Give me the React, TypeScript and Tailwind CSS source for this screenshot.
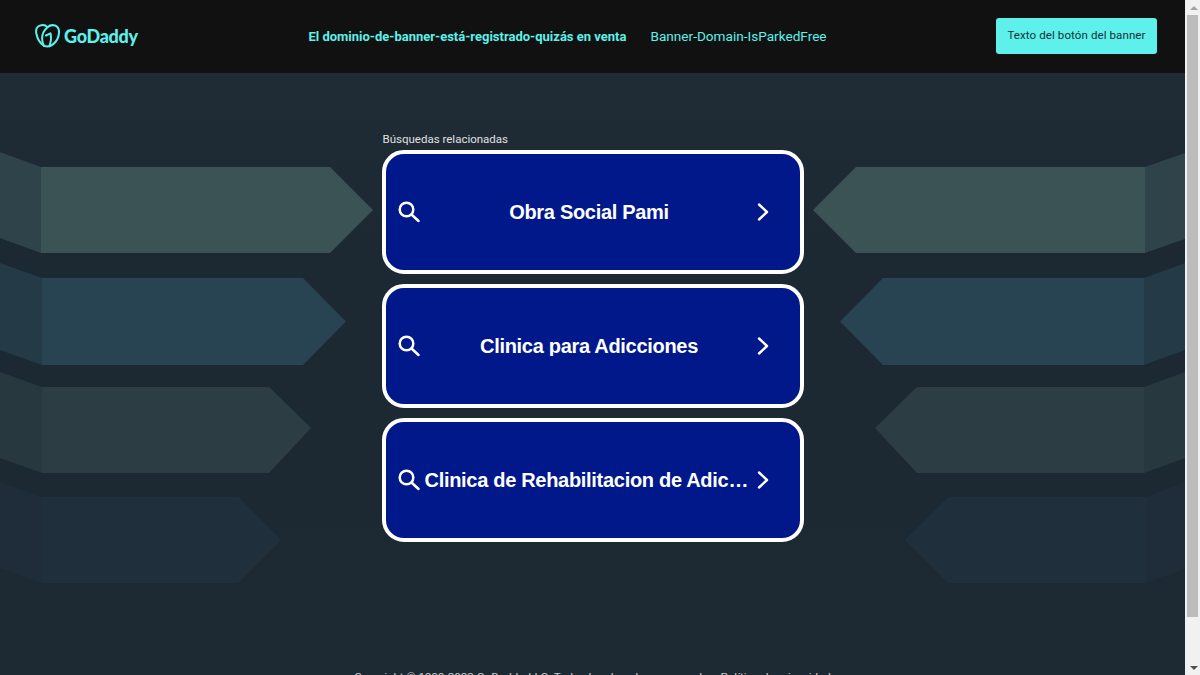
const searches = ["Obra Social Pami", "Clinica para Adicciones", "Clinica de Rehabilitacion de Adicciones"]

function BackgroundArrows() {
    return (
        <svg className="absolute left-0 top-0" width="1185" height="602" viewBox="0 73 1185 602">
            <defs>
                <linearGradient id="pageBg" x1="0" y1="0" x2="0" y2="1">
                    <stop offset="0" stopColor="#1f2c35" />
                    <stop offset="0.3" stopColor="#1c2832" />
                    <stop offset="0.65" stopColor="#1d2932" />
                    <stop offset="1" stopColor="#1e2a33" />
                </linearGradient>
            </defs>
            <rect x="0" y="73" width="1185" height="602" fill="url(#pageBg)" />
            {/* left side */}
            <polygon points="0,152 41,167 41,253 0,238" fill="#2f444a" />
            <polygon points="41,167 330,167 373,210 330,253 41,253" fill="#3c5356" />
            <polygon points="0,263 42,278 42,365 0,350" fill="#243a47" />
            <polygon points="42,278 303,278 346,321.5 303,365 42,365" fill="#284352" />
            <polygon points="0,372 42,387 42,473 0,458" fill="#27383f" />
            <polygon points="42,387 269,387 311,428 269,473 42,473" fill="#2c3e44" />
            <polygon points="0,482 41,497 41,583 0,568" fill="#1e2d39" />
            <polygon points="41,497 238,497 281,540 238,583 41,583" fill="#1f303c" />
            {/* right side */}
            <polygon points="1185,153 1145,167 1145,253 1185,239" fill="#2f444a" />
            <polygon points="1145,167 856,167 813,210 856,253 1145,253" fill="#3c5356" />
            <polygon points="1185,263 1144,278 1144,365 1185,350" fill="#243a47" />
            <polygon points="1144,278 883,278 840,321.5 883,365 1144,365" fill="#284352" />
            <polygon points="1185,372 1144,387 1144,473 1185,458" fill="#27383f" />
            <polygon points="1144,387 917,387 875,428 917,473 1144,473" fill="#2c3e44" />
            <polygon points="1185,482 1146,497 1146,583 1185,569" fill="#1e2d39" />
            <polygon points="1146,497 948,497 905,540 948,583 1146,583" fill="#1f303c" />
        </svg>
    )
}

function Logo() {
    return (
        <div className="mb-[2px] flex w-[104px] items-center gap-[4px] text-[#5ef0ea]">
            <svg width="25" height="24" viewBox="0 0 25 24" fill="none" stroke="currentColor" strokeWidth="2" strokeLinecap="round" strokeLinejoin="round" className="shrink-0">
                <path d="M12.5 3.2C10.8 1.3 7.6.7 4.8 1.6 1.700 2.700.6 6 1.400 9.800c.8 4.400 3.700 9.400 7.400 12 3 1 6.500.7 9.200-1.400 3.600-2.900 5.700-7.500 6-11.500.2-3.400-1.200-6.400-4-7.400-2.700-.8-5.600 0-7.500 1.700" />
                <path d="M12.500 3.200C9.500 5.800 7 10 7.100 14.300c.1 3.300 1 6.300 1.700 7.500" />
                <path d="M11 11.500l4.500-2.200c.8 3.400.6 8.300-1.200 13" />
            </svg>
            <span className="font-['Lato',sans-serif] text-[18px] font-black leading-none tracking-[-0.3px]">GoDaddy</span>
        </div>
    )
}

function SearchIcon() {
    return (
        <svg width="22" height="22" viewBox="0 0 22 22" fill="none" stroke="white" strokeWidth="2.500" strokeLinecap="round" className="shrink-0">
            <circle cx="8.500" cy="8.500" r="6.800" />
            <path d="M13.500 13.500L20.500 20" />
        </svg>
    )
}

function ChevronIcon() {
    return (
        <svg width="12" height="18" viewBox="0 0 12 18" fill="none" stroke="white" strokeWidth="2.400" strokeLinecap="round" strokeLinejoin="round" className="shrink-0">
            <path d="M2 1.500L10 9L2 16.500" />
        </svg>
    )
}

function SearchCard({ label }: { label: string }) {
    return (
        <a className="flex h-[124px] w-[422px] items-center rounded-[22px] border-4 border-white bg-[#00188a] pl-[12px] pr-[31px]">
            <SearchIcon />
            <span className="ml-[5px] mr-[3px] min-w-0 flex-1 truncate text-center font-['Liberation_Sans',sans-serif] text-[20px] font-bold leading-none tracking-[-0.3px] text-white">
                {label}
            </span>
            <ChevronIcon />
        </a>
    )
}

function Scrollbar() {
    return (
        <div className="flex h-[675px] w-[15px] shrink-0 flex-col items-end bg-[#f1f1f1]">
            <div className="flex h-[15px] w-[13px] items-center justify-center">
                <div className="h-0 w-0 border-x-[4px] border-b-[4px] border-x-transparent border-b-[#a3a3a3]" />
            </div>
            <div className="mr-[2px] h-[602px] w-[11px] bg-[#bcbcbc]" />
            <div className="flex w-[13px] flex-1 items-end justify-center pb-[5px]">
                <div className="h-0 w-0 border-x-[4px] border-t-[4px] border-x-transparent border-t-[#505050]" />
            </div>
        </div>
    )
}

export default function App() {
    return (
        <div className="flex h-[675px] w-[1200px] overflow-hidden">
            <div className="flex min-w-0 flex-1 flex-col">
                <header className="flex h-[73px] shrink-0 items-center justify-between bg-[#111111] pl-[35px] pr-[28px] font-['Roboto',sans-serif]">
                    <Logo />
                    <p className="mb-[2px] whitespace-nowrap text-[#5ef0ea]">
                        <b className="text-[13px] font-bold">El dominio-de-banner-está-registrado-quizás en venta</b>
                        <span className="ml-[24px] text-[13.600px] font-normal">Banner-Domain-IsParkedFree</span>
                    </p>
                    <button className="mb-[2px] h-[36px] w-[161px] rounded-[3px] bg-[#5ef0ea] text-[11.500px] tracking-[0.1px] text-[#123238]">
                        Texto del botón del banner
                    </button>
                </header>
                <main className="relative flex flex-1 flex-col items-center pt-[57px] font-['Roboto',sans-serif]">
                    <BackgroundArrows />
                    <div className="relative flex w-[422px] flex-col gap-[10px]">
                        <p className="-mb-[10px] h-[20px] pl-px text-[11.500px] leading-[18px] text-[#e0e0e0]">Búsquedas relacionadas</p>
                        {searches.map((label) => (
                            <SearchCard key={label} label={label} />
                        ))}
                    </div>
                    <p className="relative mt-[127px] whitespace-nowrap text-[11.600px] leading-[16px] text-[#c9cdd0]">
                        Copyright © 1999-2023 GoDaddy, LLC. Todos los derechos reservados. Política de privacidad
                    </p>
                </main>
            </div>
            <Scrollbar />
        </div>
    )
}
